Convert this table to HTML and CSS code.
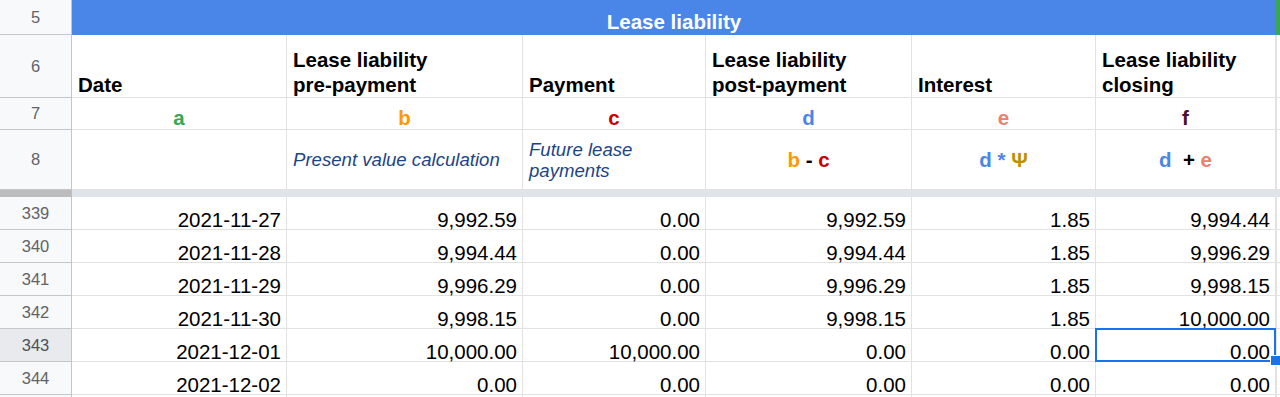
FILE: index.html
```html
<!DOCTYPE html>
<html>
<head>
<meta charset="utf-8">
<link rel="stylesheet" href="styles.css">
</head>
<body>
<div class="sheet">
  <div class="row r5">
    <div class="rh">5</div>
    <div class="c title">Lease liability</div>
    <div class="c edge green"></div>
  </div>
  <div class="row r6">
    <div class="rh">6</div>
    <div class="c hd">Date</div>
    <div class="c hd">Lease liability<br>pre-payment</div>
    <div class="c hd">Payment</div>
    <div class="c hd">Lease liability<br>post-payment</div>
    <div class="c hd">Interest</div>
    <div class="c hd">Lease liability<br>closing</div>
    <div class="c edge"></div>
  </div>
  <div class="row r7">
    <div class="rh">7</div>
    <div class="c letter green-t">a</div>
    <div class="c letter orange-t">b</div>
    <div class="c letter red-t">c</div>
    <div class="c letter blue-t">d</div>
    <div class="c letter salmon-t">e</div>
    <div class="c letter purple-t">f</div>
    <div class="c edge"></div>
  </div>
  <div class="row r8">
    <div class="rh">8</div>
    <div class="c note"></div>
    <div class="c note">Present value calculation</div>
    <div class="c note">Future lease<br>payments</div>
    <div class="c formula"><span class="orange-t">b</span> - <span class="red-t">c</span></div>
    <div class="c formula"><span class="blue-t">d * </span><span class="gold-t">Ψ</span></div>
    <div class="c formula"><span class="blue-t">d</span>  + <span class="salmon-t">e</span></div>
    <div class="c edge"></div>
  </div>
  <div class="row band">
    <div class="rh"></div>
    <div class="c band-cells"></div>
  </div>
  <div class="row data">
    <div class="rh">339</div>
    <div class="c num">2021-11-27</div>
    <div class="c num">9,992.59</div>
    <div class="c num">0.00</div>
    <div class="c num">9,992.59</div>
    <div class="c num">1.85</div>
    <div class="c num">9,994.44</div>
    <div class="c edge"></div>
  </div>
  <div class="row data">
    <div class="rh">340</div>
    <div class="c num">2021-11-28</div>
    <div class="c num">9,994.44</div>
    <div class="c num">0.00</div>
    <div class="c num">9,994.44</div>
    <div class="c num">1.85</div>
    <div class="c num">9,996.29</div>
    <div class="c edge"></div>
  </div>
  <div class="row data">
    <div class="rh">341</div>
    <div class="c num">2021-11-29</div>
    <div class="c num">9,996.29</div>
    <div class="c num">0.00</div>
    <div class="c num">9,996.29</div>
    <div class="c num">1.85</div>
    <div class="c num">9,998.15</div>
    <div class="c edge"></div>
  </div>
  <div class="row data">
    <div class="rh">342</div>
    <div class="c num">2021-11-30</div>
    <div class="c num">9,998.15</div>
    <div class="c num">0.00</div>
    <div class="c num">9,998.15</div>
    <div class="c num">1.85</div>
    <div class="c num">10,000.00</div>
    <div class="c edge"></div>
  </div>
  <div class="row data">
    <div class="rh sel-rh">343</div>
    <div class="c num">2021-12-01</div>
    <div class="c num">10,000.00</div>
    <div class="c num">10,000.00</div>
    <div class="c num">0.00</div>
    <div class="c num">0.00</div>
    <div class="c num selected">0.00</div>
    <div class="c edge"><span class="handle"></span></div>
  </div>
  <div class="row data">
    <div class="rh">344</div>
    <div class="c num">2021-12-02</div>
    <div class="c num">0.00</div>
    <div class="c num">0.00</div>
    <div class="c num">0.00</div>
    <div class="c num">0.00</div>
    <div class="c num">0.00</div>
    <div class="c edge"></div>
  </div>
  <div class="row data">
    <div class="rh"></div>
    <div class="c num"></div>
    <div class="c num"></div>
    <div class="c num"></div>
    <div class="c num"></div>
    <div class="c num"></div>
    <div class="c num"></div>
    <div class="c edge"></div>
  </div>
</div>
</body>
</html>
```

FILE: styles.css
```css
html, body {
  margin: 0;
  padding: 0;
  background: #fff;
  overflow: hidden;
  width: 1280px;
  height: 397px;
}

.sheet {
  font-family: "Liberation Sans", Arial, sans-serif;
  color: #000;
  width: 1280px;
}

.row {
  display: grid;
  grid-template-columns: 72px 215px 236px 183px 206px 184px 180px 4px;
}

.rh {
  box-sizing: border-box;
  background: #f8f9fa;
  border-right: 1px solid #c4c7c5;
  border-bottom: 1px solid #c4c7c5;
  color: #5f6368;
  font-size: 16.5px;
  display: flex;
  align-items: center;
  justify-content: center;
}

.sel-rh {
  background: #e8eaed;
  color: #4d5156;
}

.c {
  box-sizing: border-box;
  border-right: 1px solid #e2e2e2;
  border-bottom: 1px solid #e2e2e2;
  display: flex;
  position: relative;
  min-width: 0;
}

.edge {
  border-right: none;
  border-left: 1px solid #e2e2e2;
}

.r5 { height: 35px; }
.r6 { height: 63px; }
.r7 { height: 32px; }
.r8 { height: 60px; }
.band { height: 7px; }
.data { height: 33px; }

.title {
  grid-column: span 6;
  background: #4a86e8;
  border-right: none;
  border-bottom: 1px solid #4a86e8;
  color: #fff;
  font-weight: bold;
  font-size: 20.5px;
  line-height: 24px;
  justify-content: center;
  align-items: flex-end;
}

.green {
  background: #38a853;
  border-left: 1px solid #38a853;
  border-bottom: 1px solid #38a853;
}

.hd {
  font-weight: bold;
  font-size: 20.5px;
  line-height: 25px;
  align-items: flex-end;
  padding-left: 6px;
}

.letter {
  font-weight: bold;
  font-size: 20.5px;
  line-height: 22px;
  justify-content: center;
  align-items: flex-end;
}

.note {
  font-style: italic;
  font-size: 18.6px;
  line-height: 21px;
  color: #1c4587;
  align-items: center;
  padding-left: 6px;
}

.formula {
  font-weight: bold;
  font-size: 20.5px;
  line-height: 24px;
  white-space: pre;
  justify-content: center;
  align-items: center;
  padding-top: 1px;
}

.band .rh {
  background: #bdbdbd;
  border: none;
}

.band-cells {
  grid-column: span 7;
  background: #dfe3ea;
  border: none;
}

.num {
  font-size: 20.5px;
  line-height: 17px;
  justify-content: flex-end;
  align-items: flex-end;
  padding-right: 5px;
  padding-bottom: 1px;
  white-space: nowrap;
}

.selected::after {
  content: "";
  position: absolute;
  left: -1px;
  top: -1px;
  right: -1px;
  bottom: -1px;
  border: 2px solid #1a73e8;
  pointer-events: none;
}

.handle {
  position: absolute;
  left: -7px;
  bottom: -5px;
  width: 9px;
  height: 9px;
  background: #1a73e8;
  border: 1px solid #fff;
  z-index: 3;
}

.green-t { color: #34a853; }
.orange-t { color: #ff9900; }
.red-t { color: #cc0000; }
.blue-t { color: #4a86e8; }
.salmon-t { color: #e6826f; }
.purple-t { color: #4c1130; }
.gold-t { color: #bf9000; }
```
